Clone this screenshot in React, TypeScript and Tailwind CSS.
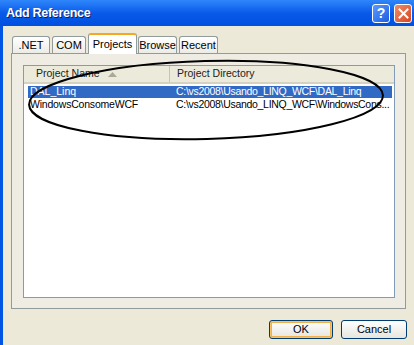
const font = "font-['Liberation_Sans',Arial,sans-serif]";

const Tab = ({ label, width, active = false, className = '' }: { label: string; width: string; active?: boolean; className?: string }) => {
    if (active) {
        return (
            <div className={`relative z-10 -mb-px h-[21px] ${width} ${className} shrink-0 flex items-center justify-center rounded-t-[3px] border-x border-[#919B9C] bg-white border-t-2 border-t-[#F5A623] text-[11px] text-black`}>
                {label}
            </div>
        );
    }
    return (
        <div className={`h-[17px] ${width} ${className} shrink-0 flex items-center justify-center rounded-t-[3px] border-x border-t border-[#919B9C] bg-gradient-to-b from-white to-[#ECEBE6] text-[11px] text-black pt-px`}>
            {label}
        </div>
    );
};

const XpButton = ({ label, isDefault = false, width }: { label: string; isDefault?: boolean; width: string }) => (
    <button className={`h-[19px] ${width} shrink-0 rounded-[3px] border border-[#003C74] bg-gradient-to-b from-white to-[#E6E5DE] text-[11px] text-black flex items-center justify-center ${isDefault ? 'shadow-[inset_0_0_0_1px_#F8C262,inset_0_0_0_2px_#F0B14A]' : ''}`}>
        {label}
    </button>
);

const App = () => {
    return (
        <div className={`relative w-[414px] h-[345px] overflow-hidden flex flex-col ${font}`}>

            {/* title bar */}
            <div className="h-[26px] flex items-center justify-between pl-[6px] pr-[2px] bg-gradient-to-b from-[#2F86FA] via-[#0A5AEA] to-[#0050E0]">
                <span className="font-bold text-[12.5px] tracking-[-0.3px] text-white [text-shadow:1px_1px_0_#0A1E6E]">Add Reference</span>
                <div className="flex items-center gap-[4px]">
                    <div className="w-[18px] h-[19px] rounded-[3px] border border-white bg-gradient-to-br from-[#5B9BFF] to-[#1A5CE0] flex items-center justify-center text-white font-bold text-[14px] leading-none">?</div>
                    <div className="w-[18px] h-[19px] rounded-[3px] border border-white bg-gradient-to-br from-[#F08B68] to-[#D7431C] flex items-center justify-center">
                        <svg width="11" height="11" viewBox="0 0 11 11">
                            <path d="M1.5 1.5 L9.5 9.5 M9.5 1.5 L1.5 9.5" stroke="white" strokeWidth="2" strokeLinecap="square" />
                        </svg>
                    </div>
                </div>
            </div>

            {/* body */}
            <div className="flex flex-1 min-h-0">
                <div className="w-[3px] shrink-0 bg-[#0055E5]" />
                <div className="w-[411px] flex flex-col bg-[#ECE9D8] pt-[7px] pl-[8px]">

                    {/* tabs */}
                    <div className="flex items-end h-[20px] pl-[1px]">
                        <Tab label=".NET" width="w-[38px]" />
                        <Tab label="COM" width="w-[34px]" className="ml-[2px]" />
                        <Tab label="Projects" width="w-[49px]" className="ml-[2px]" active />
                        <Tab label="Browse" width="w-[39px]" className="ml-px" />
                        <Tab label="Recent" width="w-[39px]" className="ml-[2px]" />
                    </div>

                    {/* panel */}
                    <div className="w-[395px] h-[256px] border border-[#919B9C] bg-[#EFEDE3] pt-[11px] pl-[11px] pr-[10px] pb-[10px] flex">
                        <div className="flex-1 min-w-0 border border-[#7F9DB9] bg-white flex flex-col">
                            {/* header */}
                            <div className="h-[18px] flex text-[10.5px] text-[#222] bg-[#EBEADB] border-b-[2px] border-[#D6D2C2]">
                                <div className="w-[146px] shrink-0 flex items-center pl-[12px] border-r border-[#C7C5B2]">
                                    <span>Project Name</span>
                                    <svg width="9" height="5" viewBox="0 0 9 5" className="ml-[8px]">
                                        <path d="M0 5 L4.5 0 L9 5 Z" fill="#ACA899" />
                                    </svg>
                                </div>
                                <div className="flex-1 min-w-0 flex items-center pl-[7px]">Project Directory</div>
                            </div>
                            {/* rows */}
                            <div className="flex flex-col pt-[2px] pl-[4px] pr-[2px] text-[10.5px]">
                                <div className="h-[12px] flex items-center bg-[#316AC5] text-white">
                                    <div className="w-[142px] shrink-0 pl-[2px] whitespace-nowrap overflow-hidden">DAL_Linq</div>
                                    <div className="flex-1 min-w-0 pl-[6px] whitespace-nowrap overflow-hidden tracking-[-0.3px]">{"C:\\vs2008\\Usando_LINQ_WCF\\DAL_Linq"}</div>
                                </div>
                                <div className="h-[12px] flex items-center text-black mt-[1px]">
                                    <div className="w-[142px] shrink-0 pl-[2px] whitespace-nowrap overflow-hidden tracking-[-0.2px]">WindowsConsomeWCF</div>
                                    <div className="flex-1 min-w-0 pl-[6px] whitespace-nowrap tracking-[-0.3px]">{"C:\\vs2008\\Usando_LINQ_WCF\\WindowsCons..."}</div>
                                </div>
                            </div>
                        </div>
                    </div>

                    {/* buttons */}
                    <div className="w-[396px] flex justify-end gap-[8px] mt-[11px]">
                        <XpButton label="OK" width="w-[64px]" isDefault />
                        <XpButton label="Cancel" width="w-[66px]" />
                    </div>
                </div>
            </div>

            {/* hand-drawn annotation */}
            <svg className="absolute left-0 top-0 pointer-events-none" width="414" height="345" viewBox="0 0 414 345">
                <ellipse cx="206" cy="100" rx="177" ry="39" fill="none" stroke="black" strokeWidth="2" transform="rotate(-1.5 206 100)" />
            </svg>
        </div>
    );
};

export default App;
